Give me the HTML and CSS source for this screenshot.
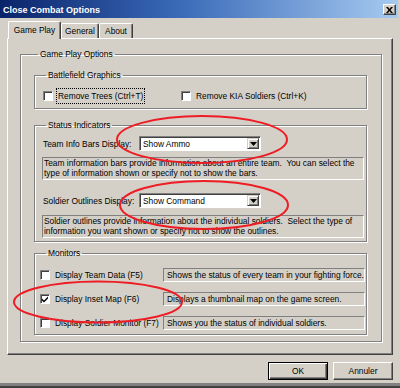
FILE: index.html
```html
<!DOCTYPE html>
<html>
<head>
<meta charset="utf-8">
<title>Close Combat Options</title>
<link rel="stylesheet" href="styles.css">
</head>
<body>
<div class="window">
  <div class="titlebar">
    <span class="title">Close Combat Options</span>
    <span class="close-btn"><svg width="7" height="6" viewBox="0 0 7 6"><path d="M0 0h2l1.5 2 1.5-2h2l-2.5 3 2.5 3h-2l-1.5-2-1.5 2h-2l2.5-3z" fill="#000"/></svg></span>
  </div>
  <div class="tabs">
    <div class="tab active">Game Play</div>
    <div class="tab">General</div>
    <div class="tab">About</div>
  </div>
  <div class="panel">
    <fieldset class="group outer">
      <legend>Game Play Options</legend>
      <fieldset class="group gfx">
        <legend>Battlefield Graphics</legend>
        <div class="check-row">
          <label class="check trees"><span class="box"></span><span class="lbl focus">Remove Trees (Ctrl+T)</span></label>
          <label class="check kia"><span class="box"></span><span class="lbl">Remove KIA Soldiers (Ctrl+K)</span></label>
        </div>
      </fieldset>
      <fieldset class="group status">
        <legend>Status Indicators</legend>
        <div class="field-row">
          <span class="field-label">Team Info Bars Display:</span>
          <div class="select"><span class="sel-text">Show Ammo</span><span class="sel-btn"><svg width="7" height="4" viewBox="0 0 7 4"><path d="M0 0h7l-3.5 4z" fill="#000"/></svg></span></div>
        </div>
        <div class="desc">Team information bars provide information about an entire team.&nbsp; You can select the<br>type of information shown or specify not to show the bars.</div>
        <div class="field-row second">
          <span class="field-label">Soldier Outlines Display:</span>
          <div class="select"><span class="sel-text">Show Command</span><span class="sel-btn"><svg width="7" height="4" viewBox="0 0 7 4"><path d="M0 0h7l-3.5 4z" fill="#000"/></svg></span></div>
        </div>
        <div class="desc second">Soldier outlines provide information about the individual soldiers.&nbsp; Select the type of<br>information you want shown or specify not to show the outlines.</div>
      </fieldset>
      <fieldset class="group monitors">
        <legend>Monitors</legend>
        <div class="mon-row">
          <label class="check"><span class="box"></span><span class="lbl">Display Team Data (F5)</span></label>
          <div class="mon-desc">Shows the status of every team in your fighting force.</div>
        </div>
        <div class="mon-row">
          <label class="check"><span class="box checked"><svg width="8" height="8" viewBox="0 0 8 8"><path d="M1 3.5l2 2 4-4v2l-4 4-2-2z" fill="#000"/></svg></span><span class="lbl">Display Inset Map (F6)</span></label>
          <div class="mon-desc">Displays a thumbnail map on the game screen.</div>
        </div>
        <div class="mon-row">
          <label class="check"><span class="box"></span><span class="lbl">Display Soldier Monitor (F7)</span></label>
          <div class="mon-desc">Shows you the status of individual soldiers.</div>
        </div>
      </fieldset>
    </fieldset>
  </div>
  <div class="buttons">
    <button class="btn default">OK</button>
    <button class="btn">Annuler</button>
  </div>
  <svg class="annot" width="400" height="388" viewBox="0 0 400 388">
    <ellipse cx="202" cy="139.5" rx="85" ry="23.5"/>
    <ellipse cx="204" cy="205" rx="84" ry="24"/>
    <ellipse cx="98" cy="302" rx="84" ry="20.5"/>
  </svg>
</div>
</body>
</html>
```
FILE: styles.css
```css
* { box-sizing: border-box; }
html, body { margin: 0; padding: 0; }
body {
  width: 400px;
  height: 388px;
  overflow: hidden;
  background: #d4d0c8;
  font-family: "Liberation Sans", Arial, sans-serif;
  font-size: 8.4px;
  color: #000;
}
.window {
  position: relative;
  width: 400px;
  height: 388px;
  border-bottom: 2px solid #404040;
  box-shadow: inset 0 -3px 0 #808080;
}
.titlebar {
  height: 18px;
  margin: 0 2px 0 0;
  padding: 1px 2px 0 3px;
  background: linear-gradient(to right, #0a246a, #3a6ab8 45%, #a6caf0);
  display: flex;
  align-items: center;
  justify-content: space-between;
}
.title {
  color: #fff;
  font-weight: bold;
  font-size: 9px;
}
.close-btn {
  width: 13px;
  height: 11px;
  background: #d4d0c8;
  border: 1px solid;
  border-color: #fff #404040 #404040 #fff;
  box-shadow: inset -1px -1px 0 #808080;
  display: flex;
  align-items: center;
  justify-content: center;
}
.tabs {
  display: flex;
  align-items: flex-end;
  height: 20px;
  padding-left: 8px;
  position: relative;
  z-index: 1;
}
.tab {
  height: 15px;
  padding: 0;
  white-space: nowrap;
  display: flex;
  align-items: center;
  justify-content: center;
  border: 1px solid;
  border-bottom: none;
  border-color: #fff #404040 #404040 #fff;
  border-radius: 2px 2px 0 0;
  box-shadow: inset -1px 0 0 #808080;
  background: #d4d0c8;
}
.tab.active {
  width: 53px;
  height: 18px;
  margin-bottom: -1px;
  padding-bottom: 2px;
}
.tab:nth-child(2) { width: 38px; }
.tab:nth-child(3) { width: 34px; }
.panel {
  margin-left: 7px;
  width: 386px;
  border: 1px solid;
  border-color: #fff #404040 #404040 #fff;
  box-shadow: inset -1px -1px 0 #808080;
  padding: 10px 10px 12px 12px;
}
fieldset.group {
  margin: 0;
  border: 1px solid #808080;
  box-shadow: inset 1px 1px 0 #fff, 1px 1px 0 #fff;
  min-width: 0;
}
fieldset.group > legend {
  padding: 0 2px;
  margin-left: 4px;
  line-height: 10px;
  height: 10px;
}
.outer {
  padding: 11px 14px 6px 13px;
}
.gfx {
  padding: 9px 1px 5px 7px;
  margin-bottom: 11px !important;
}
.status {
  padding: 6px 1px 3px 7px;
  margin-bottom: 6px !important;
}
.monitors {
  padding: 10px 1px 4px 7px;
}
.check-row {
  display: flex;
  height: 14px;
  align-items: center;
}
.check {
  display: flex;
  align-items: center;
}
.box {
  width: 10px;
  height: 10px;
  background: #fff;
  border: 1px solid;
  border-color: #808080 #fff #fff #808080;
  box-shadow: inset 1px 1px 0 #404040;
  display: flex;
  align-items: center;
  justify-content: center;
  flex: none;
}
.lbl {
  margin-left: 3px;
  padding: 2px 1px;
  border: 1px solid transparent;
  line-height: 10px;
}
.lbl.focus { border: 1px dotted #000; }
.trees { margin-left: 1px; width: 138px; }
.field-row {
  display: flex;
  align-items: center;
  height: 15px;
}
.field-row.second { margin-top: 13px; }
.field-label {
  width: 97px;
  padding-left: 1px;
  flex: none;
}
.select {
  width: 122px;
  height: 15px;
  background: #fff;
  border: 1px solid;
  border-color: #808080 #fff #fff #808080;
  box-shadow: inset 1px 1px 0 #404040;
  display: flex;
  align-items: center;
  justify-content: space-between;
  padding: 1px 1px 1px 3px;
}
.sel-btn {
  width: 12px;
  height: 11px;
  background: #d4d0c8;
  border: 1px solid;
  border-color: #d4d0c8 #404040 #404040 #d4d0c8;
  box-shadow: inset 1px 1px 0 #fff, inset -1px -1px 0 #808080;
  display: flex;
  align-items: center;
  justify-content: center;
}
.desc {
  margin-top: 6px;
  width: 322px;
  height: 23px;
  border: 1px solid;
  border-color: #808080 #fff #fff #808080;
  padding: 0 1px;
  line-height: 10px;
  white-space: nowrap;
}
.desc.second { margin-top: 7px; }
.mon-row {
  display: flex;
  align-items: center;
  justify-content: space-between;
  height: 14px;
  margin-top: 10px;
}
legend + .mon-row { margin-top: 0; }
.mon-row .check { margin-left: -2px; }
.mon-desc {
  width: 202px;
  height: 14px;
  border: 1px solid;
  border-color: #808080 #fff #fff #808080;
  padding: 0 3px;
  line-height: 12px;
  white-space: nowrap;
}
.buttons {
  display: flex;
  justify-content: flex-end;
  gap: 5px;
  padding: 7px 7px 0 0;
}
.btn {
  width: 60px;
  height: 18px;
  margin: 0;
  padding: 0;
  font-family: inherit;
  font-size: 8.4px;
  color: #000;
  background: #d4d0c8;
  border: 1px solid;
  border-color: #fff #404040 #404040 #fff;
  box-shadow: inset -1px -1px 0 #808080;
}
.btn.default {
  border: 1px solid #000;
  box-shadow: inset 1px 1px 0 #fff, inset -1px -1px 0 #404040, inset -2px -2px 0 #808080;
}
.annot {
  position: absolute;
  left: 0;
  top: 0;
  pointer-events: none;
  z-index: 5;
}
.annot ellipse {
  fill: none;
  stroke: #ee1c24;
  stroke-width: 2;
}
```
